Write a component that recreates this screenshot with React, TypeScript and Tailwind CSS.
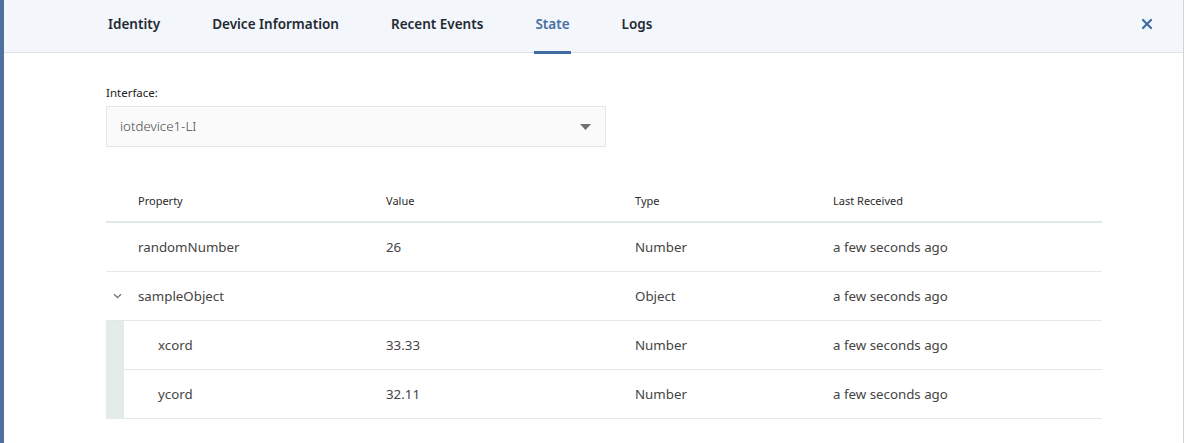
import React from "react";
import { X } from "lucide-react";

const tabs = ["Identity", "Device Information", "Recent Events", "State", "Logs"];

type Row = { name: string; value: string; type: string; received: string; child?: boolean; parent?: boolean };

const rows: Row[] = [
  { name: "randomNumber", value: "26", type: "Number", received: "a few seconds ago" },
  { name: "sampleObject", value: "", type: "Object", received: "a few seconds ago", parent: true },
  { name: "xcord", value: "33.33", type: "Number", received: "a few seconds ago", child: true },
  { name: "ycord", value: "32.11", type: "Number", received: "a few seconds ago", child: true },
];

const Chevron = () => (
  <svg width="9" height="6" viewBox="0 0 9 6" className="text-[#7a7a7a]">
    <path d="M1 1.2 L4.5 4.6 L8 1.2" fill="none" stroke="currentColor" strokeWidth="1.4" />
  </svg>
);

const App = () => {
  return (
    <div
      className="w-[1184px] h-[443px] bg-white border-l-4 border-l-[#50709f] border-r border-r-[#d4d4d4] overflow-hidden"
      style={{ fontFamily: '"Noto Sans", "Open Sans", Arial, sans-serif' }}
    >
      <div className="h-[53px] bg-[#f3f6fa] border-b border-[#dde2e8] flex items-stretch pl-[104px] pr-[28px]">
        <div className="flex gap-[52px] flex-1">
          {tabs.map((t) => (
            <div key={t} className="relative flex items-center">
              <span
                className={
                  "text-[13.5px] font-semibold leading-5 pb-[4px] " +
                  (t === "State" ? "text-[#4a6fa5]" : "text-[#1f2a33]")
                }
              >
                {t}
              </span>
              {t === "State" && (
                <div className="absolute left-[-1px] right-[-1px] bottom-[-2px] h-[3px] bg-[#3f6aa3]" />
              )}
            </div>
          ))}
        </div>
        <div className="flex items-center pb-[5px]">
          <X size={16} strokeWidth={3.2} className="text-[#3f6aa3]" />
        </div>
      </div>

      <div className="pl-[102px] pt-[32px] w-[1100px]">
        <div className="text-[11.5px] leading-4 text-[#222] mb-[5px]">Interface:</div>
        <div className="w-[500px] h-[41px] bg-[#fafafa] border border-[#e6e6e6] flex items-center justify-between pl-[13px] pr-[14px]">
          <span className="text-[13.3px] text-[#4a4a4a] font-light">iotdevice1-LI</span>
          <svg width="11" height="6" viewBox="0 0 11 6">
            <path d="M0 0 H11 L5.5 6 Z" fill="#6f6f6f" />
          </svg>
        </div>

        <div className="mt-[35px] w-[996px]">
          <div className="h-[41px] grid grid-cols-[280px_249px_198px_1fr] items-center border-b-2 border-[#dfe7e7] text-[11px] text-[#2a2a2a]">
            <div className="pl-[32px]">Property</div>
            <div>Value</div>
            <div>Type</div>
            <div>Last Received</div>
          </div>
          {rows.map((r) => (
            <div key={r.name} className="flex h-[49px]">
              {r.child && <div className="w-[18px] bg-[#e4ecea]" />}
              <div
                className={
                  "flex-1 grid items-center pt-[2px] border-b border-[#e6e6e6] text-[13.3px] text-[#444] " +
                  (r.child ? "grid-cols-[262px_249px_198px_1fr]" : "grid-cols-[280px_249px_198px_1fr]")
                }
              >
                <div className={r.child ? "pl-[34px]" : "pl-[32px] relative"}>
                  {r.parent && (
                    <span className="absolute left-[7px] top-[6px]">
                      <Chevron />
                    </span>
                  )}
                  {r.name}
                </div>
                <div>{r.value}</div>
                <div>{r.type}</div>
                <div>{r.received}</div>
              </div>
            </div>
          ))}
        </div>
      </div>
    </div>
  );
};

export default App;
